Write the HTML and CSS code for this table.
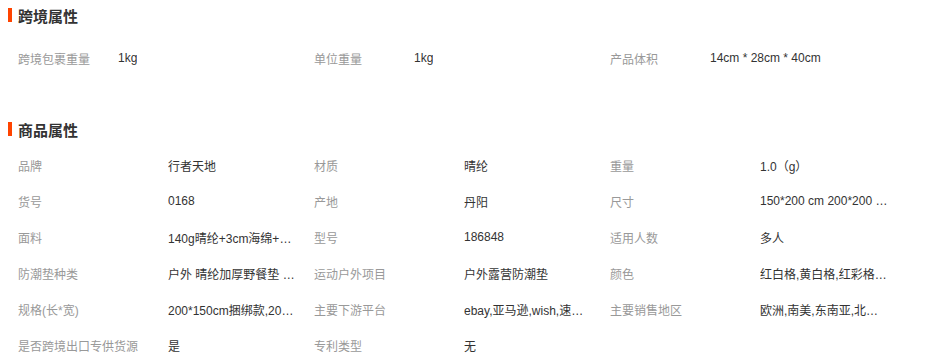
FILE: index.html
```html
<!DOCTYPE html>
<html lang="zh-CN">
<head>
<meta charset="utf-8">
<title>属性</title>
<link rel="stylesheet" href="styles.css">
</head>
<body>
<section class="block">
  <h2 class="title"><span class="bar"></span>跨境属性</h2>
  <div class="grid grid-short">
    <div class="item"><span class="label">跨境包裹重量</span><span class="value">1kg</span></div>
    <div class="item"><span class="label">单位重量</span><span class="value">1kg</span></div>
    <div class="item"><span class="label">产品体积</span><span class="value">14cm * 28cm * 40cm</span></div>
  </div>
</section>
<section class="block block-second">
  <h2 class="title"><span class="bar"></span>商品属性</h2>
  <div class="grid grid-long">
    <div class="item"><span class="label">品牌</span><span class="value">行者天地</span></div>
    <div class="item"><span class="label">材质</span><span class="value">晴纶</span></div>
    <div class="item"><span class="label">重量</span><span class="value">1.0（g）</span></div>
    <div class="item"><span class="label">货号</span><span class="value">0168</span></div>
    <div class="item"><span class="label">产地</span><span class="value">丹阳</span></div>
    <div class="item"><span class="label">尺寸</span><span class="value">150*200 cm 200*200 cm</span></div>
    <div class="item"><span class="label">面料</span><span class="value">140g晴纶+3cm海绵+铝膜</span></div>
    <div class="item"><span class="label">型号</span><span class="value">186848</span></div>
    <div class="item"><span class="label">适用人数</span><span class="value">多人</span></div>
    <div class="item"><span class="label">防潮垫种类</span><span class="value">户外 晴纶加厚野餐垫 防潮垫</span></div>
    <div class="item"><span class="label">运动户外项目</span><span class="value">户外露营防潮垫</span></div>
    <div class="item"><span class="label">颜色</span><span class="value">红白格,黄白格,红彩格,蓝白格</span></div>
    <div class="item"><span class="label">规格(长*宽)</span><span class="value">200*150cm捆绑款,200*200cm捆绑款</span></div>
    <div class="item"><span class="label">主要下游平台</span><span class="value">ebay,亚马逊,wish,速卖通,独立站</span></div>
    <div class="item"><span class="label">主要销售地区</span><span class="value">欧洲,南美,东南亚,北美,非洲</span></div>
    <div class="item"><span class="label">是否跨境出口专供货源</span><span class="value">是</span></div>
    <div class="item"><span class="label">专利类型</span><span class="value">无</span></div>
  </div>
</section>
</body>
</html>
```
FILE: styles.css
```css
html, body {
  margin: 0;
  padding: 0;
  background: #fff;
}
body {
  font-family: "Liberation Sans", "Noto Sans CJK SC", sans-serif;
  font-size: 12px;
  color: #333;
}
.block {
  padding-left: 8px;
}
.block-second {
  margin-top: 38px;
}
.title {
  margin: 0;
  height: 30px;
  display: flex;
  align-items: center;
  gap: 6px;
  font-size: 15px;
  font-weight: bold;
  color: #333;
}
.bar {
  display: block;
  width: 4px;
  height: 14px;
  background: #ff4400;
}
.grid {
  display: grid;
  grid-template-columns: repeat(3, 296px);
  padding-left: 10px;
  margin-top: 10px;
}
.grid-long {
  margin-top: 3px;
}
.item {
  height: 36px;
  display: flex;
  align-items: center;
  white-space: nowrap;
}
.label {
  color: #999;
  flex: none;
}
.grid-short .label {
  width: 100px;
}
.grid-long .label {
  width: 150px;
}
.value {
  color: #333;
  overflow: hidden;
  text-overflow: ellipsis;
  max-width: 128px;
}
.grid-short .value {
  max-width: 180px;
}
```
